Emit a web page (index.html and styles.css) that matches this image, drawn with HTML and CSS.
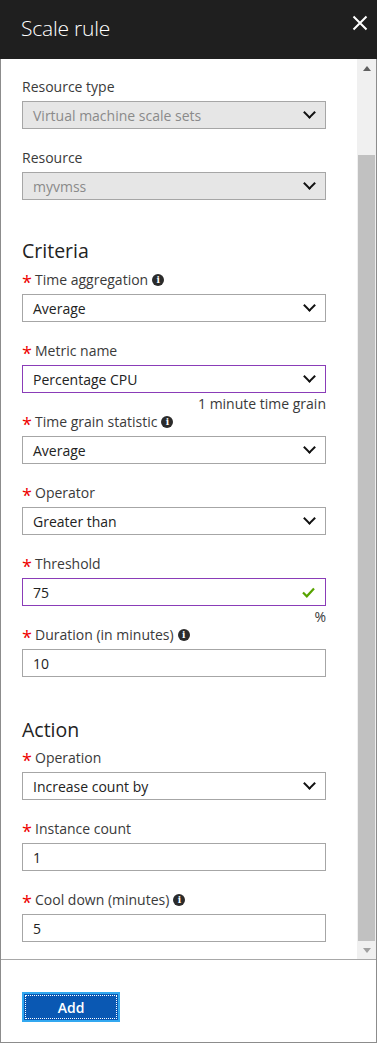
FILE: index.html
```html
<!DOCTYPE html>
<html lang="en">
  <head>
    <meta charset="UTF-8" />
    <meta name="viewport" content="width=device-width, initial-scale=1.0" />
    <title>Scale rule</title>
    <link rel="stylesheet" href="styles.css">
  </head>
  <body>
    <div class="blade">
      <div class="header">
        <h1>Scale rule</h1>
        <button class="close" aria-label="Close">
          <svg width="16" height="16" viewBox="0 0 16 16"><path d="M1.5 1.5L14.5 14.5M14.5 1.5L1.5 14.5" stroke="#fff" stroke-width="2"/></svg>
        </button>
      </div>

      <div class="body">
        <div class="scroll">
          <div class="field">
            <div class="label">Resource type</div>
            <div class="box disabled">Virtual machine scale sets<span class="chev"></span></div>
          </div>
          <div class="field">
            <div class="label">Resource</div>
            <div class="box disabled">myvmss<span class="chev"></span></div>
          </div>

          <h2>Criteria</h2>
          <div class="field first">
            <div class="label"><span class="req">*</span>Time aggregation<span class="info">i</span></div>
            <div class="box">Average<span class="chev"></span></div>
          </div>
          <div class="field">
            <div class="label"><span class="req">*</span>Metric name</div>
            <div class="box focus">Percentage CPU<span class="chev"></span></div>
            <div class="hint">1 minute time grain</div>
          </div>
          <div class="field tight">
            <div class="label"><span class="req">*</span>Time grain statistic<span class="info">i</span></div>
            <div class="box">Average<span class="chev"></span></div>
          </div>
          <div class="field">
            <div class="label"><span class="req">*</span>Operator</div>
            <div class="box">Greater than<span class="chev"></span></div>
          </div>
          <div class="field">
            <div class="label"><span class="req">*</span>Threshold</div>
            <div class="box focus">75
              <svg class="check" width="13" height="11" viewBox="0 0 13 11"><path d="M1 5.5L4.8 9.3L12 1.5" fill="none" stroke="#57a300" stroke-width="2.2"/></svg>
            </div>
            <div class="hint">%</div>
          </div>
          <div class="field tight">
            <div class="label"><span class="req">*</span>Duration (in minutes)<span class="info">i</span></div>
            <div class="box">10</div>
          </div>

          <h2 class="action">Action</h2>
          <div class="field first">
            <div class="label"><span class="req">*</span>Operation</div>
            <div class="box">Increase count by<span class="chev"></span></div>
          </div>
          <div class="field">
            <div class="label"><span class="req">*</span>Instance count</div>
            <div class="box">1</div>
          </div>
          <div class="field">
            <div class="label"><span class="req">*</span>Cool down (minutes)<span class="info">i</span></div>
            <div class="box">5</div>
          </div>
        </div>

        <div class="scrollbar">
          <div class="arrow up"></div>
          <div class="track"></div>
          <div class="thumb"></div>
          <div class="arrow down"></div>
        </div>
      </div>

      <div class="footer">
        <button class="add">Add</button>
      </div>
    </div>
  </body>
</html>
```

FILE: styles.css
```css
body {
  margin: 0;
  font-family: "Open Sans", "Noto Sans", sans-serif;
  background-color: #fff;
}
.blade {
  width: 377px;
  height: 1043px;
  box-sizing: border-box;
  border: 1px solid #8c8c8c;
  border-top: none;
  display: flex;
  flex-direction: column;
}
.header {
  height: 59px;
  background-color: #1f1f1f;
  display: flex;
  align-items: center;
  justify-content: space-between;
  padding: 0 9px 0 21px;
  margin: 0 -1px;
  flex-shrink: 0;
}
.header h1 {
  margin: 0 0 4px 0;
  font-weight: 300;
  font-size: 21px;
  color: #fff;
  letter-spacing: -0.2px;
}
.close {
  background: transparent;
  border: none;
  padding: 0;
  margin-bottom: 14px;
  width: 16px;
  height: 16px;
  cursor: pointer;
}
.body {
  height: 900px;
  display: flex;
  border-bottom: 1px solid #a8a8a8;
}
.scroll {
  flex: 1;
  padding: 18px 31px 0 21px;
}
.field {
  margin-top: 19px;
}
.field:first-child,
.field.first,
.field.tight {
  margin-top: 0;
}
.label {
  height: 20px;
  line-height: 20px;
  font-size: 14px;
  color: #3a3a3a;
  margin-bottom: 4px;
  display: flex;
  align-items: center;
}
.req {
  color: #e00;
  font-size: 18px;
  width: 13px;
  margin-top: 4px;
}
.info {
  display: inline-flex;
  align-items: center;
  justify-content: center;
  width: 12px;
  height: 12px;
  border-radius: 50%;
  background-color: #2b2b2b;
  color: #fff;
  font-family: "DejaVu Serif", serif;
  font-weight: bold;
  font-size: 9px;
  margin-left: 4px;
}
.box {
  height: 28px;
  box-sizing: border-box;
  border: 1px solid #a6a6a6;
  padding: 0 10px;
  font-size: 14px;
  color: #222;
  display: flex;
  align-items: center;
  justify-content: space-between;
}
.box.disabled {
  background-color: #e6e6e6;
  color: #8a8a8a;
}
.box.focus {
  border-color: #8a3cb8;
}
.chev {
  width: 7px;
  height: 7px;
  border-right: 2.5px solid #111;
  border-bottom: 2.5px solid #111;
  transform: rotate(45deg);
  margin: 0 1px 5px 0;
}
.hint {
  height: 19px;
  line-height: 22px;
  text-align: right;
  font-size: 14px;
  color: #3a3a3a;
}
h2 {
  margin: 37px 0 5px 0;
  height: 28px;
  line-height: 28px;
  font-weight: normal;
  font-size: 19.5px;
  color: #222;
}
h2.action {
  margin: 39px 0 4px 0;
}
.scrollbar {
  width: 19px;
  display: flex;
  flex-direction: column;
  background-color: #f0f0f0;
}
.arrow {
  height: 18px;
  display: flex;
  align-items: center;
  justify-content: center;
}
.arrow.up::after {
  content: "";
  border: 4px solid transparent;
  border-bottom: 5px solid #606060;
  border-top: none;
}
.arrow.down::after {
  content: "";
  border: 4px solid transparent;
  border-top: 5px solid #a0a0a0;
  border-bottom: none;
}
.track {
  height: 78px;
}
.thumb {
  flex: 1;
  background-color: #c1c1c1;
  margin: 0 1px;
}
.footer {
  flex: 1;
  padding: 32px 21px 0 21px;
}
.add {
  width: 98px;
  height: 30px;
  background-color: #0a58b3;
  color: #fff;
  font-family: "Open Sans", sans-serif;
  font-weight: 600;
  font-size: 14px;
  border: 2px solid #32a8f0;
  outline: 1px dotted #fff;
  outline-offset: -4px;
  cursor: pointer;
}
```
